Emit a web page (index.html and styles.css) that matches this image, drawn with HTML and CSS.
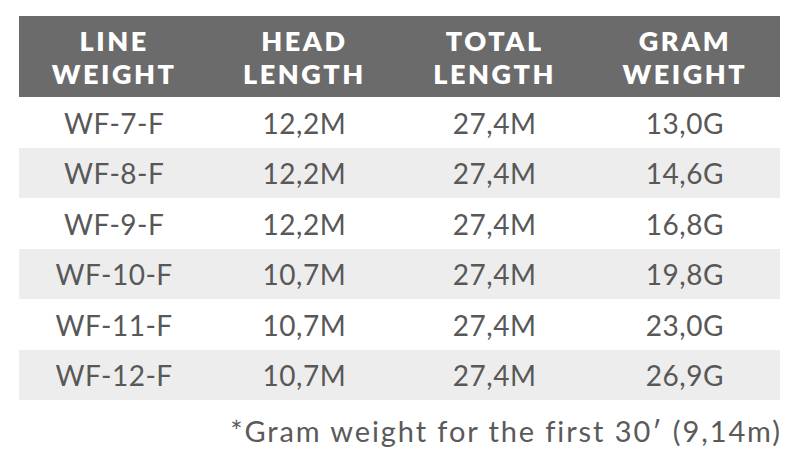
FILE: index.html
```html
<!DOCTYPE html>
<html>
<head>
<meta charset="utf-8">
<link rel="stylesheet" href="styles.css">
</head>
<body>
<div class="wrap">
  <div class="table">
    <div class="row head">
      <div class="cell">LINE<br>WEIGHT</div>
      <div class="cell">HEAD<br>LENGTH</div>
      <div class="cell">TOTAL<br>LENGTH</div>
      <div class="cell">GRAM<br>WEIGHT</div>
    </div>
    <div class="row r1"><div class="cell">WF-7-F</div><div class="cell">12,2M</div><div class="cell">27,4M</div><div class="cell">13,0G</div></div>
    <div class="row r2 alt"><div class="cell">WF-8-F</div><div class="cell">12,2M</div><div class="cell">27,4M</div><div class="cell">14,6G</div></div>
    <div class="row r1"><div class="cell">WF-9-F</div><div class="cell">12,2M</div><div class="cell">27,4M</div><div class="cell">16,8G</div></div>
    <div class="row r2 alt"><div class="cell">WF-10-F</div><div class="cell">10,7M</div><div class="cell">27,4M</div><div class="cell">19,8G</div></div>
    <div class="row r1"><div class="cell">WF-11-F</div><div class="cell">10,7M</div><div class="cell">27,4M</div><div class="cell">23,0G</div></div>
    <div class="row r2 alt"><div class="cell">WF-12-F</div><div class="cell">10,7M</div><div class="cell">27,4M</div><div class="cell">26,9G</div></div>
  </div>
  <p class="note">*Gram weight for the first 30′ (9,14m)</p>
</div>
</body>
</html>
```
FILE: styles.css
```css
html, body {
  margin: 0;
  padding: 0;
  background: #ffffff;
}
.wrap {
  width: 761px;
  padding: 16px 0 0 19px;
  font-family: "Lato", "Liberation Sans", sans-serif;
}
.table {
  display: flex;
  flex-direction: column;
}
.row {
  display: grid;
  grid-template-columns: repeat(4, 1fr);
  align-items: center;
  color: #585858;
  font-size: 28px;
  letter-spacing: 0.5px;
}
.row .cell {
  text-align: center;
}
.r1 { height: 51px; }
.r2 { height: 50px; }
.alt { background: #ededed; }
.head {
  height: 81px;
  background: #6b6b6b;
  color: #ffffff;
  font-weight: 800;
  font-size: 27px;
  line-height: 33px;
  letter-spacing: 2.5px;
}
.note {
  margin: 13px 0 0;
  text-align: right;
  color: #5a5a5a;
  font-size: 29px;
  letter-spacing: 1.9px;
  margin-right: -2px;
}
```
